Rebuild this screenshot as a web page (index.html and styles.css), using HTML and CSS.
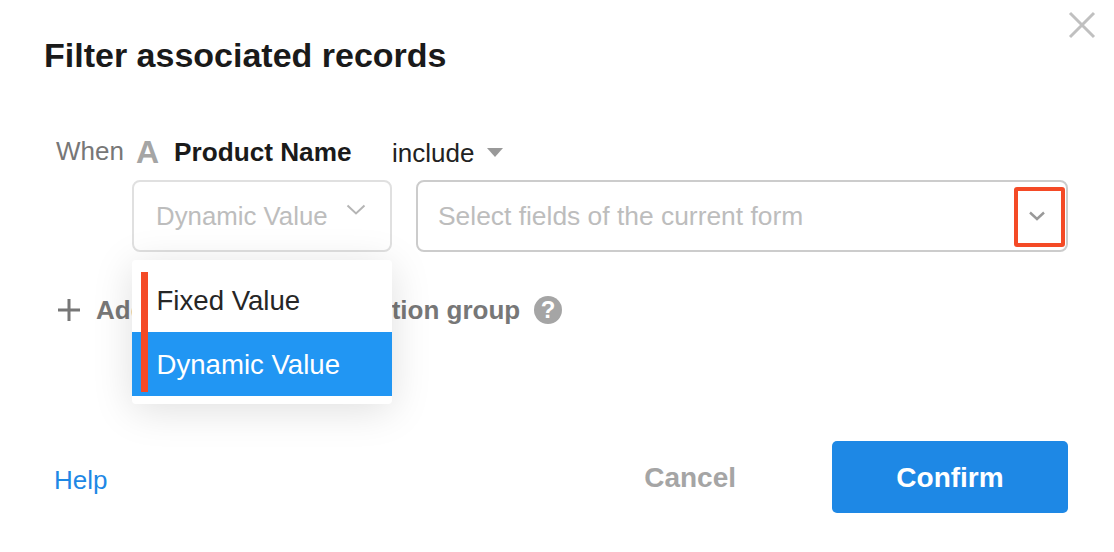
FILE: index.html
```
<!DOCTYPE html>
<html lang="en">
<head>
<meta charset="utf-8">
<title>Filter associated records</title>
<link rel="stylesheet" href="styles.css">
</head>
<body>
<div class="dialog">
  <button class="close" aria-label="Close">
    <svg width="28" height="28" viewBox="0 0 28 28"><path d="M2 2 L26 26 M26 2 L2 26" fill="none" stroke="#c0c0c0" stroke-width="3"/></svg>
  </button>
  <h1 class="title">Filter associated records</h1>
  <div class="condition">
    <div class="condition-head">
      <span class="when">When</span>
      <span class="field-icon">A</span>
      <span class="field-name">Product Name</span>
      <span class="operator">include</span>
      <span class="caret"></span>
    </div>
    <div class="condition-inputs">
      <div class="type-wrap">
        <div class="select type-select">
          <span>Dynamic Value</span>
          <svg class="chev" width="20" height="12" viewBox="0 0 20 12"><path d="M1.5 1.5 L10 9.5 L18.5 1.5" fill="none" stroke="#b5b5b5" stroke-width="2"/></svg>
        </div>
        <div class="menu">
          <span class="marker"></span>
          <div class="menu-item">Fixed Value</div>
          <div class="menu-item active">Dynamic Value</div>
        </div>
      </div>
      <div class="select field-select">
        <span>Select fields of the current form</span>
        <span class="highlight">
          <svg width="16" height="10" viewBox="0 0 16 10"><path d="M1 1.5 L8 8 L15 1.5" fill="none" stroke="#999" stroke-width="2.4"/></svg>
        </span>
      </div>
    </div>
  </div>
  <div class="add-row">
    <svg width="22" height="22" viewBox="0 0 22 22"><path d="M11 0 V22 M0 11 H22" fill="none" stroke="#777" stroke-width="3"/></svg>
    <span class="add-text"><span class="add-lead">Add condition or </span>condition group</span>
    <span class="hint">?</span>
  </div>
  <div class="footer">
    <a class="help">Help</a>
    <div class="actions">
      <span class="cancel">Cancel</span>
      <button class="confirm">Confirm</button>
    </div>
  </div>
</div>
</body>
</html>
```
FILE: styles.css
```
* { box-sizing: border-box; }
html, body { margin: 0; height: 100%; background: #fff; overflow: hidden; }
body { font-family: "Liberation Sans", Arial, sans-serif; }
.dialog { position: relative; width: 1114px; height: 552px; padding: 36px 46px 0 44px; }
.close { position: absolute; left: 1068px; top: 11px; width: 28px; height: 28px; padding: 0; border: 0; background: none; }
.close svg { display: block; }
.title { margin: 0; font-size: 34px; line-height: 38px; font-weight: 700; color: #1a1a1a; }
.condition { margin: 63px 0 0 1px; }
.condition-head { display: flex; align-items: center; height: 30px; padding-left: 11px; }
.when { width: 80px; font-size: 26px; color: #777; position: relative; top: -1px; }
.field-icon { width: 38px; font-size: 32px; line-height: 30px; font-weight: 700; color: #a5a5a5; }
.field-name { width: 218px; font-size: 26.2px; font-weight: 700; color: #1a1a1a; }
.operator { font-size: 26px; color: #222; margin: 0 13px 0 0; position: relative; top: 1px; }
.caret { width: 0; height: 0; border-left: 8.5px solid transparent; border-right: 8.5px solid transparent; border-top: 9px solid #999; }
.condition-inputs { display: flex; gap: 24px; margin: 13px 0 0 87px; }
.type-wrap { position: relative; width: 260px; }
.select { display: flex; align-items: center; height: 72px; border-radius: 8px; font-size: 26px; color: #bdbdbd; background: #fff; }
.type-select { justify-content: space-between; padding: 0 24px 0 22px; border: 2px solid #e0e0e0; font-size: 25.8px; }
.chev { position: relative; top: -6px; }
.field-select { flex: 1; position: relative; padding-left: 20px; border: 2px solid #ccc; font-size: 26.4px; }
.highlight { position: absolute; right: 1px; top: 5px; width: 51px; height: 60px; display: flex; align-items: center; justify-content: center; padding: 0 5px 3px 0; border: 4px solid #f44a26; border-radius: 3px; }
.menu { position: absolute; left: 0; top: 80px; z-index: 2; width: 260px; padding: 8px 0; background: #fff; border-radius: 4px; box-shadow: 0 6px 40px rgba(0,0,0,.13); }
.marker { position: absolute; left: 9px; top: 12px; width: 7px; height: 120px; background: #f44a26; }
.menu-item { height: 64px; padding-left: 24.5px; font-size: 27.6px; line-height: 66px; color: #262626; }
.menu-item.active { background: #2196f3; color: #fff; }
.add-row { display: flex; align-items: center; height: 30px; margin: 43px 0 0 14px; }
.add-text { margin-left: 16px; font-size: 26px; font-weight: 700; color: #777; }
.add-lead { word-spacing: 3.7px; }
.hint { width: 28px; height: 28px; margin-left: 14px; border-radius: 50%; background: #a5a5a5; color: #fff; font-size: 24px; line-height: 28px; font-weight: 700; text-align: center; }
.footer { display: flex; justify-content: space-between; align-items: center; margin-top: 116px; }
.help { font-size: 26px; color: #1e88e5; padding-left: 10px; position: relative; top: 3px; }
.actions { display: flex; align-items: center; }
.cancel { font-size: 28px; font-weight: 700; color: #a5a5a5; margin-right: 96px; position: relative; top: 1px; }
.confirm { width: 236px; height: 72px; padding-top: 2px; border: 0; border-radius: 5px; background: #1e88e5; color: #fff; font: 700 28px "Liberation Sans", Arial, sans-serif; }
```
